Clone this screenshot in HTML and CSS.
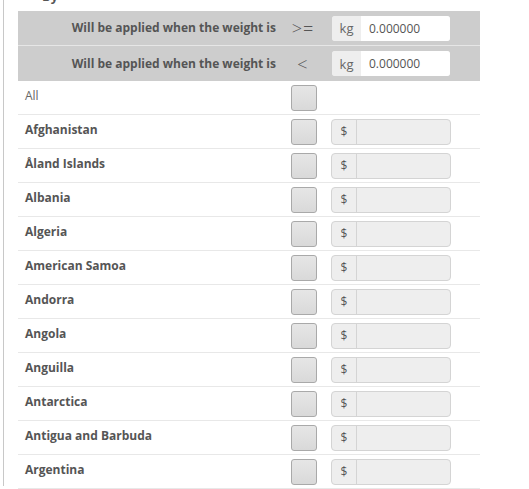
FILE: index.html
```html
<!DOCTYPE html>
<html>
<head>
<meta charset="utf-8">
<link rel="stylesheet" href="styles.css">
</head>
<body>
<div class="panel">
  <div class="caption">By</div>
  <div class="table">
    <div class="row head sep">
      <div class="name right">Will be applied when the weight is</div>
      <div class="op">&gt;=</div>
      <div class="cell"><div class="group small"><span class="addon">kg</span><span class="field white">0.000000</span></div></div>
    </div>
    <div class="row head">
      <div class="name right">Will be applied when the weight is</div>
      <div class="op">&lt;</div>
      <div class="cell"><div class="group small"><span class="addon">kg</span><span class="field white">0.000000</span></div></div>
    </div>
    <div class="row">
      <div class="name plain">All</div>
      <div class="op"><span class="check"></span></div>
      <div class="cell"></div>
    </div>
    <div class="row"><div class="name">Afghanistan</div><div class="op"><span class="check"></span></div><div class="cell"><div class="group"><span class="addon">$</span><span class="field"></span></div></div></div>
    <div class="row"><div class="name">Åland Islands</div><div class="op"><span class="check"></span></div><div class="cell"><div class="group"><span class="addon">$</span><span class="field"></span></div></div></div>
    <div class="row"><div class="name">Albania</div><div class="op"><span class="check"></span></div><div class="cell"><div class="group"><span class="addon">$</span><span class="field"></span></div></div></div>
    <div class="row"><div class="name">Algeria</div><div class="op"><span class="check"></span></div><div class="cell"><div class="group"><span class="addon">$</span><span class="field"></span></div></div></div>
    <div class="row"><div class="name">American Samoa</div><div class="op"><span class="check"></span></div><div class="cell"><div class="group"><span class="addon">$</span><span class="field"></span></div></div></div>
    <div class="row"><div class="name">Andorra</div><div class="op"><span class="check"></span></div><div class="cell"><div class="group"><span class="addon">$</span><span class="field"></span></div></div></div>
    <div class="row"><div class="name">Angola</div><div class="op"><span class="check"></span></div><div class="cell"><div class="group"><span class="addon">$</span><span class="field"></span></div></div></div>
    <div class="row"><div class="name">Anguilla</div><div class="op"><span class="check"></span></div><div class="cell"><div class="group"><span class="addon">$</span><span class="field"></span></div></div></div>
    <div class="row"><div class="name">Antarctica</div><div class="op"><span class="check"></span></div><div class="cell"><div class="group"><span class="addon">$</span><span class="field"></span></div></div></div>
    <div class="row"><div class="name">Antigua and Barbuda</div><div class="op"><span class="check"></span></div><div class="cell"><div class="group"><span class="addon">$</span><span class="field"></span></div></div></div>
    <div class="row"><div class="name">Argentina</div><div class="op"><span class="check"></span></div><div class="cell"><div class="group"><span class="addon">$</span><span class="field"></span></div></div></div>
  </div>
</div>
</body>
</html>
```
FILE: styles.css
```css
html, body {
  margin: 0;
  padding: 0;
  background: #fff;
  height: 100%;
  overflow: hidden;
}
body {
  font-family: "Open Sans", "Liberation Sans", sans-serif;
  color: #555;
}
.panel {
  margin-left: 3px;
  border-left: 1px solid #c8c8c8;
  height: 498px;
  padding-left: 14px;
}
.caption {
  height: 23px;
  margin-top: -12px;
  padding-left: 24px;
  font-size: 13px;
  font-weight: 700;
  line-height: 17px;
  color: #555;
  overflow: hidden;
}
.table {
  width: 462px;
}
.row {
  display: flex;
  align-items: center;
  height: 34px;
  box-sizing: border-box;
  border-bottom: 1px solid #e8e8e8;
}
.row.head {
  background: #cdcdcd;
  border-bottom: none;
  height: 35px;
}
.row.head.sep {
  border-bottom: 1px solid #e6e6e6;
}
.name {
  width: 265px;
  box-sizing: border-box;
  padding-left: 7px;
  font-size: 12px;
  font-weight: 700;
  color: #555;
  line-height: 16px;
  margin-top: -3px;
}
.name.plain {
  font-weight: 400;
  color: #666;
}
.name.right {
  text-align: right;
  padding-right: 7px;
  margin-top: 0;
}
.op {
  width: 40px;
  display: flex;
  justify-content: center;
  align-items: center;
  font-size: 18px;
  font-weight: 300;
  letter-spacing: 1px;
  color: #555;
}
.cell {
  flex: 1;
  padding-left: 8px;
  display: flex;
  align-items: center;
}
.check {
  display: block;
  width: 26px;
  height: 26px;
  box-sizing: border-box;
  border: 1px solid #a9a9a9;
  border-radius: 3px;
  background: linear-gradient(#e6e6e6, #d9d9d9);
  margin-left: 1px;
}
.group {
  display: flex;
  width: 120px;
  height: 26px;
  box-sizing: border-box;
  border: 1px solid #d4d4d4;
  border-radius: 4px;
  background: #eee;
  overflow: hidden;
}
.group .addon {
  width: 24px;
  border-right: 1px solid #d4d4d4;
  display: flex;
  align-items: center;
  justify-content: center;
  font-size: 12px;
  color: #555;
}
.group .field {
  flex: 1;
}
.group.small {
  width: 118px;
  height: 25px;
  margin-left: 1px;
  border: none;
  border-radius: 3px;
}
.group.small .addon {
  width: 29px;
  border-right: none;
  background: #eee;
  font-size: 13px;
  color: #666;
}
.field.white {
  background: #fff;
  font-size: 12px;
  color: #555;
  display: flex;
  align-items: center;
  padding-left: 8px;
}
```
